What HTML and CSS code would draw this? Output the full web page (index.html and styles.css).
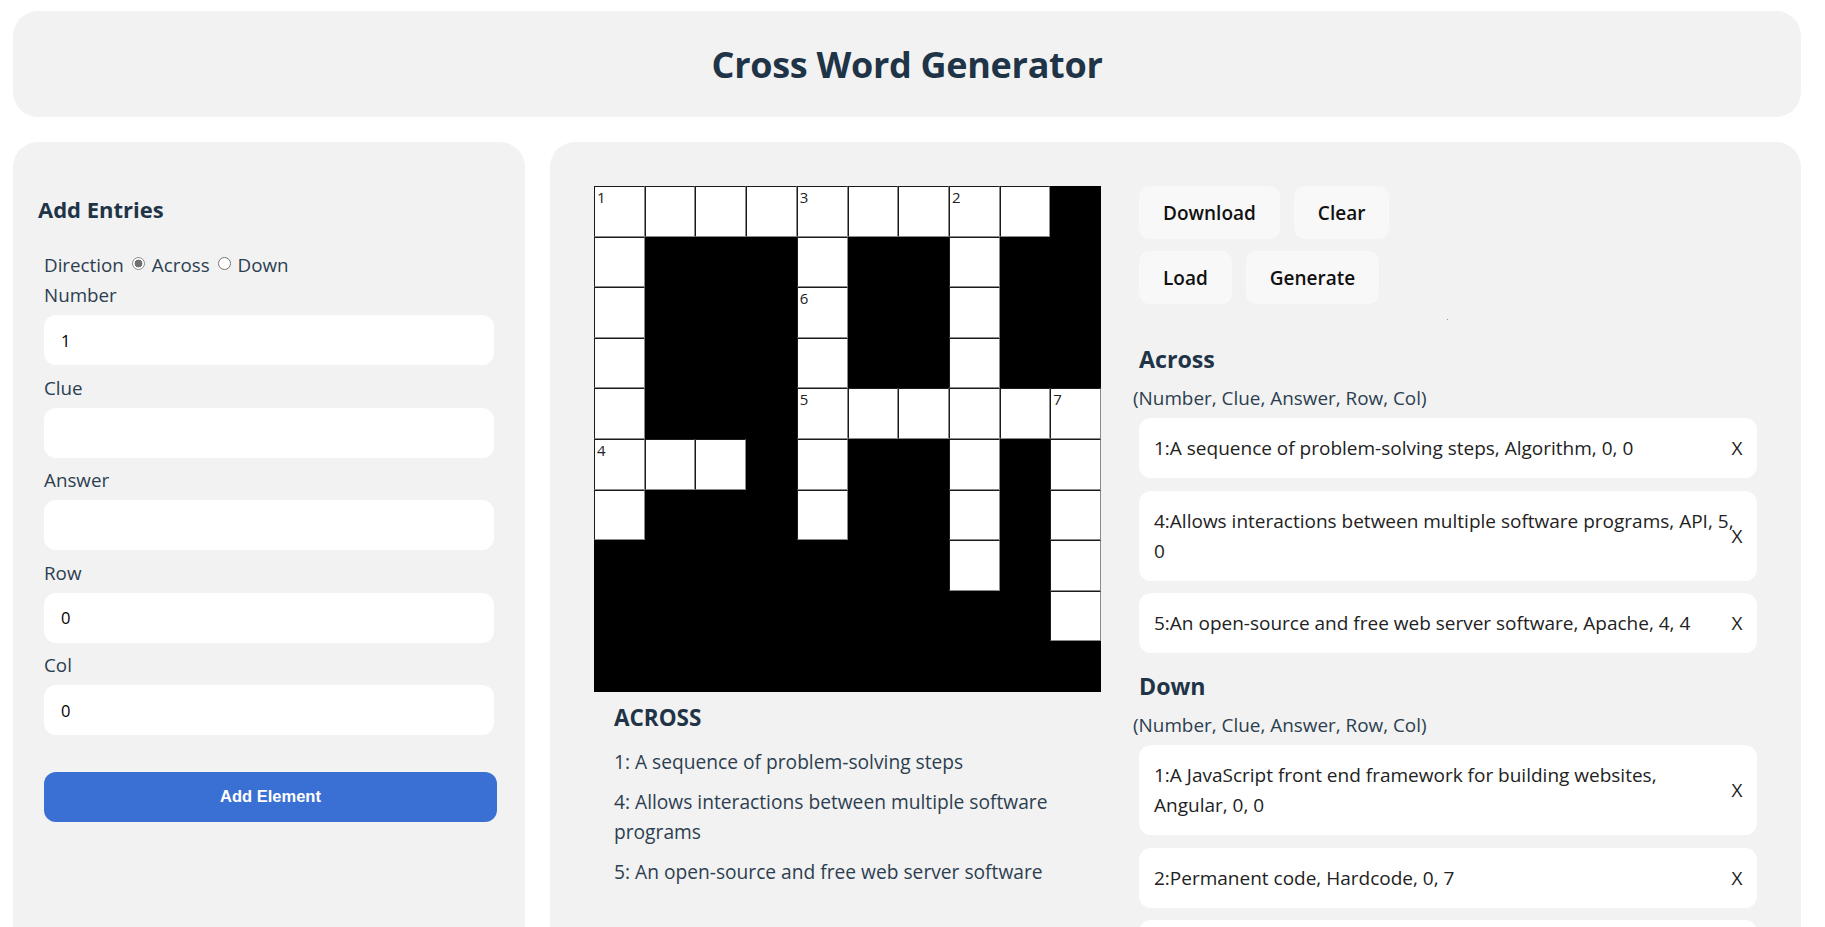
FILE: index.html
```html
<!DOCTYPE html>
<html lang="en">
<head>
<meta charset="utf-8">
<title>Cross Word Generator</title>
<link rel="stylesheet" href="styles.css">
</head>
<body>
<header class="top">
  <h1 class="title">Cross Word Generator</h1>
</header>
<main class="layout">
  <section class="panel entry-panel">
    <h3 class="entry-title">Add Entries</h3>
    <form class="entry-form">
      <div class="dir-row">
        <span>Direction</span>
        <input class="radio" type="radio" name="dir" checked>
        <span>Across</span>
        <input class="radio" type="radio" name="dir">
        <span>Down</span>
      </div>
      <label class="field-label">Number</label>
      <input class="field" type="text" value="1">
      <label class="field-label">Clue</label>
      <input class="field" type="text" value="">
      <label class="field-label">Answer</label>
      <input class="field" type="text" value="">
      <label class="field-label">Row</label>
      <input class="field" type="text" value="0">
      <label class="field-label">Col</label>
      <input class="field" type="text" value="0">
      <button class="add-btn" type="button">Add Element</button>
    </form>
  </section>

  <section class="panel board-panel">
    <div class="board-col">
      <div class="grid">
        <div class="w"><span class="n">1</span></div><div class="w"></div><div class="w"></div><div class="w"></div><div class="w"><span class="n">3</span></div><div class="w"></div><div class="w"></div><div class="w"><span class="n">2</span></div><div class="w"></div><div class="b"></div>
        <div class="w"></div><div class="b"></div><div class="b"></div><div class="b"></div><div class="w"></div><div class="b"></div><div class="b"></div><div class="w"></div><div class="b"></div><div class="b"></div>
        <div class="w"></div><div class="b"></div><div class="b"></div><div class="b"></div><div class="w"><span class="n">6</span></div><div class="b"></div><div class="b"></div><div class="w"></div><div class="b"></div><div class="b"></div>
        <div class="w"></div><div class="b"></div><div class="b"></div><div class="b"></div><div class="w"></div><div class="b"></div><div class="b"></div><div class="w"></div><div class="b"></div><div class="b"></div>
        <div class="w"></div><div class="b"></div><div class="b"></div><div class="b"></div><div class="w"><span class="n">5</span></div><div class="w"></div><div class="w"></div><div class="w"></div><div class="w"></div><div class="w"><span class="n">7</span></div>
        <div class="w"><span class="n">4</span></div><div class="w"></div><div class="w"></div><div class="b"></div><div class="w"></div><div class="b"></div><div class="b"></div><div class="w"></div><div class="b"></div><div class="w"></div>
        <div class="w"></div><div class="b"></div><div class="b"></div><div class="b"></div><div class="w"></div><div class="b"></div><div class="b"></div><div class="w"></div><div class="b"></div><div class="w"></div>
        <div class="b"></div><div class="b"></div><div class="b"></div><div class="b"></div><div class="b"></div><div class="b"></div><div class="b"></div><div class="w"></div><div class="b"></div><div class="w"></div>
        <div class="b"></div><div class="b"></div><div class="b"></div><div class="b"></div><div class="b"></div><div class="b"></div><div class="b"></div><div class="b"></div><div class="b"></div><div class="w"></div>
        <div class="b"></div><div class="b"></div><div class="b"></div><div class="b"></div><div class="b"></div><div class="b"></div><div class="b"></div><div class="b"></div><div class="b"></div><div class="b"></div>
      </div>
      <div class="clues">
        <h4 class="clues-title">ACROSS</h4>
        <p class="clue">1: A sequence of problem-solving steps</p>
        <p class="clue">4: Allows interactions between multiple software programs</p>
        <p class="clue">5: An open-source and free web server software</p>
      </div>
    </div>

    <div class="side-col">
      <div class="actions">
        <button class="act" type="button">Download</button>
        <button class="act" type="button">Clear</button>
      </div>
      <div class="actions">
        <button class="act" type="button">Load</button>
        <button class="act" type="button">Generate</button>
      </div>
      <div class="dot-row"><span class="dot"></span></div>

      <h2 class="list-title">Across</h2>
      <p class="list-sub">(Number, Clue, Answer, Row, Col)</p>
      <ul class="entries">
        <li class="entry"><span class="entry-text">1:A sequence of problem-solving steps, Algorithm, 0, 0</span><span class="x">X</span></li>
        <li class="entry"><span class="entry-text">4:Allows interactions between multiple software programs, API, 5, 0</span><span class="x">X</span></li>
        <li class="entry"><span class="entry-text">5:An open-source and free web server software, Apache, 4, 4</span><span class="x">X</span></li>
      </ul>

      <h2 class="list-title down">Down</h2>
      <p class="list-sub">(Number, Clue, Answer, Row, Col)</p>
      <ul class="entries">
        <li class="entry"><span class="entry-text">1:A JavaScript front end framework for building websites, Angular,&nbsp;0,&nbsp;0</span><span class="x">X</span></li>
        <li class="entry"><span class="entry-text">2:Permanent code, Hardcode, 0, 7</span><span class="x">X</span></li>
        <li class="entry"><span class="entry-text">3:A popular JavaScript UI library, ReactJS, 0, 4</span><span class="x">X</span></li>
        <li class="entry"><span class="entry-text">7:A type of loop in programming, While, 4, 9</span><span class="x">X</span></li>
      </ul>
    </div>
  </section>
</main>
</body>
</html>
```

FILE: styles.css
```css
* { box-sizing: border-box; }

body {
  margin: 0;
  padding: 11px 24px 40px 13px;
  background: #ffffff;
  font-family: "Open Sans", "Noto Sans", sans-serif;
  color: #2c3e50;
}

.top {
  background: #f2f2f2;
  border-radius: 25px;
  height: 106px;
  display: flex;
  align-items: center;
  justify-content: center;
}

.title {
  margin: 0;
  font-size: 36px;
  font-weight: 700;
  color: #1f3447;
  letter-spacing: -0.3px;
}

.layout {
  display: grid;
  grid-template-columns: 512px 1fr;
  gap: 25px;
  margin-top: 25px;
}

.panel {
  background: #f2f2f2;
  border-radius: 25px;
}

/* left panel */
.entry-panel {
  padding: 52px 31px 120px 25px;
}

.entry-title {
  margin: 0;
  font-size: 22px;
  line-height: 30px;
  font-weight: 700;
  color: #1f3447;
}

.entry-form {
  margin-top: 26px;
  padding-left: 6px;
  display: flex;
  flex-direction: column;
}

.dir-row {
  display: flex;
  align-items: center;
  height: 30px;
  font-size: 18.8px;
  color: #2c3e50;
}

.radio {
  appearance: none;
  -webkit-appearance: none;
  width: 13px;
  height: 13px;
  margin: 0 7px 0 8px;
  border: 1px solid #767676;
  border-radius: 50%;
  background: #fff;
  position: relative;
  top: -2px;
}

.radio:checked {
  background: radial-gradient(circle, #707070 0 3.6px, #fff 4.2px);
  border-color: #8a8a8a;
}

.field-label {
  display: block;
  font-size: 18.8px;
  line-height: 26px;
  margin-top: 2px;
  color: #2c3e50;
}

.field {
  margin-top: 7px;
  margin-bottom: 7.5px;
  width: 450px;
  height: 50px;
  border: none;
  border-radius: 12px;
  background: #ffffff;
  padding: 0 17px;
  font-family: "Open Sans", sans-serif;
  font-size: 16.5px;
  color: #000;
  outline: none;
}

.add-btn {
  margin-top: 29px;
  width: 453px;
  height: 50px;
  border: none;
  border-radius: 12px;
  background: #3a70d4;
  color: #ffffff;
  font-family: "Liberation Sans", Arial, sans-serif;
  font-weight: 700;
  font-size: 16.5px;
}

/* right panel */
.board-panel {
  padding: 44px;
  display: flex;
  align-items: flex-start;
  gap: 38px;
}

.board-col {
  width: 507px;
  flex: none;
}

.grid {
  width: 507px;
  height: 506px;
  background: #000;
  display: grid;
  grid-template-columns: repeat(10, 1fr);
  grid-template-rows: repeat(10, 1fr);
}

.grid .w {
  background: #fff;
  border-top: 1px solid #1a1a1a;
  border-left: 1px solid #1a1a1a;
  border-right: 1.5px solid #8a8a8a;
  border-bottom: 1.5px solid #8a8a8a;
  position: relative;
}

.grid .n {
  position: absolute;
  left: 2px;
  top: 0;
  font-size: 15px;
  line-height: 21px;
  color: #222;
}

.clues {
  padding-left: 20px;
}

.clues-title {
  margin: 12px 0 0;
  font-size: 22.5px;
  line-height: 28px;
  font-weight: 700;
  color: #1f3447;
}

.clue {
  margin: 15px 0 0;
  font-size: 19.2px;
  line-height: 30px;
  color: #2c3e50;
}

.clue + .clue {
  margin-top: 10px;
}

.side-col {
  flex: 1;
  min-width: 0;
}

.actions {
  display: flex;
  gap: 14px;
  margin-bottom: 12px;
}

.act {
  height: 53px;
  padding: 0 24px;
  border: none;
  border-radius: 10px;
  background: #f8f8f8;
  font-family: "Open Sans", sans-serif;
  font-size: 19px;
  font-weight: 600;
  color: #111;
}

.dot-row {
  height: 8px;
  position: relative;
}

.dot {
  position: absolute;
  left: 308px;
  top: 3px;
  width: 1px;
  height: 1px;
  background: #999;
}

.list-title {
  margin: 19px 0 0;
  font-size: 23.2px;
  line-height: 32px;
  font-weight: 700;
  color: #1f3447;
}

.list-title.down {
  margin-top: 17px;
}

.list-sub {
  margin: 10px 0 0 -6px;
  font-size: 18.9px;
  line-height: 26px;
  color: #2c3e50;
}

.entries {
  list-style: none;
  margin: 7px 0 0;
  padding: 0;
}

.entry {
  display: flex;
  align-items: center;
  background: #ffffff;
  border-radius: 12px;
  padding: 15px 14px 15px 15px;
  margin-bottom: 12.5px;
  font-size: 19px;
  line-height: 30px;
  color: #222;
}

.entry-text {
  flex: 1;
  min-width: 0;
  margin-right: -7px;
}

.x {
  flex: none;
  width: 12px;
  text-align: center;
  font-size: 19px;
  color: #222;
}
```
